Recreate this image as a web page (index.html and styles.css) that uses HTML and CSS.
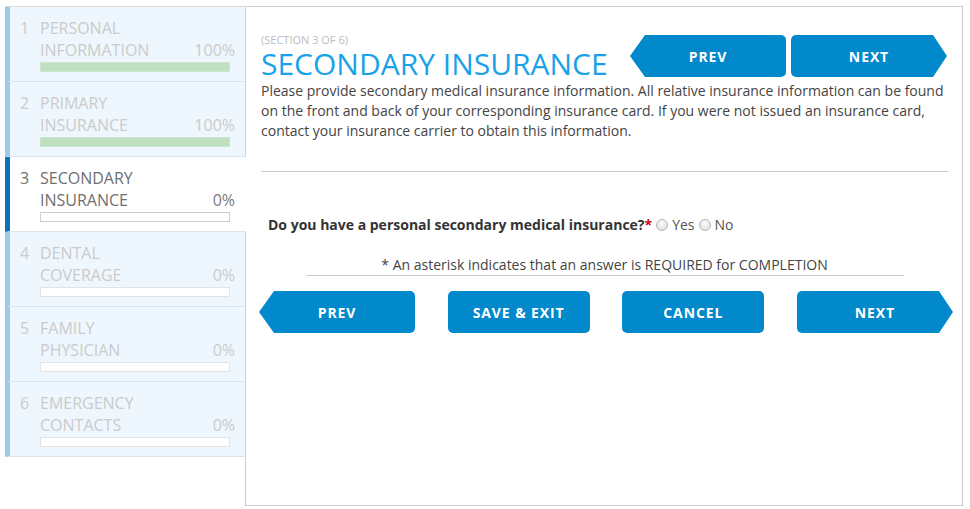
FILE: index.html
```html
<!DOCTYPE html>
<html>
<head>
<meta charset="utf-8">
<link rel="stylesheet" href="styles.css">
</head>
<body>
<div class="page">
  <nav class="sidebar">
    <div class="step done">
      <span class="num">1</span>
      <div class="step-body">
        <div class="step-head"><span class="label">PERSONAL<br>INFORMATION</span><span class="pct">100%</span></div>
        <div class="bar"><div class="fill" style="width:100%"></div></div>
      </div>
    </div>
    <div class="step done">
      <span class="num">2</span>
      <div class="step-body">
        <div class="step-head"><span class="label">PRIMARY<br>INSURANCE</span><span class="pct">100%</span></div>
        <div class="bar"><div class="fill" style="width:100%"></div></div>
      </div>
    </div>
    <div class="step active">
      <span class="num">3</span>
      <div class="step-body">
        <div class="step-head"><span class="label">SECONDARY<br>INSURANCE</span><span class="pct">0%</span></div>
        <div class="bar"></div>
      </div>
    </div>
    <div class="step">
      <span class="num">4</span>
      <div class="step-body">
        <div class="step-head"><span class="label">DENTAL<br>COVERAGE</span><span class="pct">0%</span></div>
        <div class="bar"></div>
      </div>
    </div>
    <div class="step">
      <span class="num">5</span>
      <div class="step-body">
        <div class="step-head"><span class="label">FAMILY<br>PHYSICIAN</span><span class="pct">0%</span></div>
        <div class="bar"></div>
      </div>
    </div>
    <div class="step">
      <span class="num">6</span>
      <div class="step-body">
        <div class="step-head"><span class="label">EMERGENCY<br>CONTACTS</span><span class="pct">0%</span></div>
        <div class="bar"></div>
      </div>
    </div>
  </nav>
  <main class="main">
    <div class="header">
      <div class="titles">
        <div class="section-no">(SECTION 3 OF 6)</div>
        <h1 class="title">SECONDARY INSURANCE</h1>
      </div>
      <div class="top-nav">
        <a class="btn btn-prev">PREV</a>
        <a class="btn btn-next">NEXT</a>
      </div>
    </div>
    <p class="intro">Please provide secondary medical insurance information. All relative insurance information can be found on the front and back of your corresponding insurance card. If you were not issued an insurance card, contact your insurance carrier to obtain this information.</p>
    <hr class="rule">
    <div class="question">
      <span class="q-text">Do you have a personal secondary medical insurance?</span><span class="req">*</span>
      <label class="opt"><input type="radio" name="sec" class="radio">Yes</label>
      <label class="opt"><input type="radio" name="sec" class="radio">No</label>
    </div>
    <div class="note">* An asterisk indicates that an answer is REQUIRED for COMPLETION</div>
    <div class="bottom-nav">
      <a class="btn btn-prev">PREV</a>
      <a class="btn btn-plain">SAVE &amp; EXIT</a>
      <a class="btn btn-plain">CANCEL</a>
      <a class="btn btn-next">NEXT</a>
    </div>
  </main>
</div>
</body>
</html>
```

FILE: styles.css
```css
html, body {
  margin: 0;
  padding: 0;
  background: #fff;
}
body {
  font-family: "Open Sans", "Liberation Sans", sans-serif;
  color: #444;
}
.page {
  display: flex;
  align-items: flex-start;
  padding: 6px 0 0 5px;
}
.sidebar {
  width: 241px;
  margin-right: -1px;
  position: relative;
  z-index: 1;
  border-top: 1px solid #d9d9d9;
}
.step {
  display: flex;
  box-sizing: content-box;
  padding: 10px 10px 0 10px;
  height: 64px;
  background: #eef7fd;
  border-left: 5px solid #9dcbe7;
  border-right: 1px solid #cfcfcf;
  border-bottom: 1px solid #dde5ec;
  color: #cbcbcb;
  font-size: 16px;
  line-height: 22px;
}
.step.active {
  background: #fff;
  border-left-color: #0b74b9;
  border-right-color: #fff;
  color: #6f6f6f;
}
.num {
  width: 20px;
  flex: none;
}
.step-body {
  flex: 1;
}
.step-head {
  display: flex;
  justify-content: space-between;
  align-items: flex-end;
}
.step.active .pct {
  color: #7a7a7a;
}
.bar {
  margin-top: 1px;
  width: 188px;
  height: 8px;
  border: 1px solid #e3e3e3;
  background: #fff;
}
.step.active .bar {
  border-color: #cdcdcd;
}
.step.done .bar {
  border-color: #cce5cc;
}
.fill {
  height: 100%;
  background: #bfe1bf;
}
.main {
  width: 687px;
  height: 472px;
  border: 1px solid #cccccc;
  padding: 26px 14px 0 15px;
}
.header {
  display: flex;
  justify-content: space-between;
  align-items: flex-start;
}
.section-no {
  font-size: 11px;
  line-height: 14px;
  color: #bdbdbd;
}
.title {
  margin: 0;
  font-size: 30px;
  line-height: 34px;
  font-weight: 400;
  color: #19a2e9;
}
.top-nav {
  display: flex;
  gap: 5px;
  margin-top: 2px;
  margin-right: 1px;
}
.btn {
  display: flex;
  align-items: center;
  justify-content: center;
  height: 42px;
  width: 142px;
  box-sizing: border-box;
  background: #0189cb;
  color: #fff;
  font-size: 14px;
  font-weight: 700;
  letter-spacing: 0.9px;
  border-radius: 5px;
  text-decoration: none;
}
.btn-prev {
  width: 156px;
  clip-path: polygon(15px 0, 100% 0, 100% 100%, 15px 100%, 0 50%);
}
.btn-next {
  width: 156px;
  clip-path: polygon(0 0, calc(100% - 14px) 0, 100% 50%, calc(100% - 14px) 100%, 0 100%);
}
.intro {
  margin: 0;
  font-size: 14px;
  line-height: 20px;
  color: #444;
}
.rule {
  margin: 30px 0 0 0;
  border: 0;
  border-top: 1px solid #cccccc;
  height: 0;
}
.question {
  margin-top: 43px;
  padding-left: 7px;
  font-size: 14px;
  line-height: 20px;
  display: flex;
  align-items: center;
}
.q-text {
  font-weight: 700;
  color: #333;
}
.req {
  color: #d0021b;
  font-weight: 700;
}
.opt {
  display: flex;
  align-items: center;
  color: #555;
}
.radio {
  appearance: none;
  -webkit-appearance: none;
  width: 12px;
  height: 12px;
  margin: 0 4px 0 4px;
  border-radius: 50%;
  border: 1px solid #b4b4b4;
  background: radial-gradient(circle at 50% 35%, #fafafa 0%, #e4e4e4 70%, #d8d8d8 100%);
  box-sizing: border-box;
}
.note {
  width: 598px;
  margin: 20px auto 0 auto;
  text-align: center;
  font-size: 14px;
  line-height: 20px;
  border-bottom: 1px solid #cccccc;
  color: #444;
}
.bottom-nav {
  display: flex;
  justify-content: space-between;
  margin: 15px -5px 0 -2px;
}
```
